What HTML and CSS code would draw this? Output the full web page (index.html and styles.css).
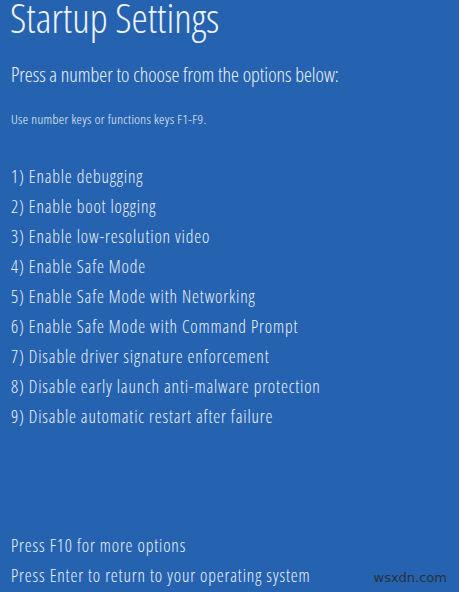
FILE: index.html
```html
<!DOCTYPE html>
<html lang="en">
<head>
<meta charset="utf-8">
<title>Startup Settings</title>
<link rel="stylesheet" href="styles.css">
</head>
<body>
<main class="screen">
  <h1 class="title">Startup Settings</h1>
  <p class="prompt">Press a number to choose from the options below:</p>
  <p class="hint">Use number keys or functions keys F1-F9.</p>
  <ol class="options">
    <li>1) Enable debugging</li>
    <li>2) Enable boot logging</li>
    <li>3) Enable low-resolution video</li>
    <li>4) Enable Safe Mode</li>
    <li>5) Enable Safe Mode with Networking</li>
    <li>6) Enable Safe Mode with Command Prompt</li>
    <li>7) Disable driver signature enforcement</li>
    <li>8) Disable early launch anti-malware protection</li>
    <li>9) Disable automatic restart after failure</li>
  </ol>
  <footer class="footer">
    <p class="line">Press F10 for more options</p>
    <div class="last-row">
      <p class="line">Press Enter to return to your operating system</p>
      <span class="watermark">wsxdn.com</span>
    </div>
  </footer>
</main>
</body>
</html>
```
FILE: styles.css
```css
html, body {
  margin: 0;
  padding: 0;
}
body {
  background: #2563b0;
  color: #eef3fb;
  font-family: "Open Sans", "DejaVu Sans", sans-serif;
  font-weight: 300;
  font-stretch: 75%;
}
.screen {
  box-sizing: border-box;
  height: 592px;
  padding: 0 12px 2px 11px;
  display: flex;
  flex-direction: column;
}
.title {
  margin: 0 0 0 -1px;
  font-size: 41px;
  line-height: 34px;
  font-weight: 300;
}
.prompt {
  margin: 28px 0 0;
  font-size: 20px;
  line-height: 26px;
}
.hint {
  margin: 22px 0 0;
  font-size: 13.5px;
  line-height: 18px;
  letter-spacing: 0.35px;
}
.options {
  list-style: none;
  margin: 33px 0 0;
  padding: 0;
}
.options li, .line {
  font-size: 17.5px;
  line-height: 30px;
  margin: 0;
  letter-spacing: 0.85px;
}
.footer {
  margin-top: auto;
}
.last-row {
  display: flex;
  justify-content: space-between;
  align-items: baseline;
}
.watermark {
  font-family: "DejaVu Sans", sans-serif;
  font-weight: 400;
  font-stretch: normal;
  letter-spacing: 0;
  font-size: 13px;
  color: #2a2f3a;
}
```
